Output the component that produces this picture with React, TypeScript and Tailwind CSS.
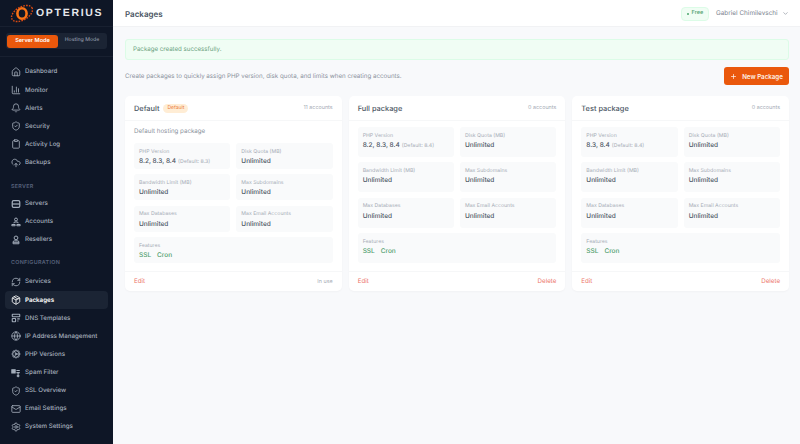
import {
  Home,
  BarChart3,
  Bell,
  ShieldCheck,
  Clipboard,
  CloudUpload,
  RefreshCw,
  Package,
  Globe,
  Cog,
  Mail,
  Settings,
  ChevronDown,
  Plus,
} from "lucide-react";
import type { ComponentType } from "react";

type IconProps = { size?: number; strokeWidth?: number; className?: string };
type NavItem = { label: string; icon: ComponentType<IconProps>; active?: boolean };

function ServersIcon({ size, className }: IconProps) {
  return (
    <svg width={size} height={size} viewBox="0 0 24 24" fill="none" stroke="currentColor" strokeWidth="3" className={className}>
      <rect x="3" y="4" width="18" height="16" rx="3" />
      <path d="M3 12h18" />
    </svg>
  );
}

function AccountsIcon({ size, className }: IconProps) {
  return (
    <svg width={size} height={size} viewBox="0 0 24 24" fill="none" stroke="currentColor" strokeWidth="2.4" className={className}>
      <circle cx="12" cy="6" r="3.5" />
      <path d="M7 15l1-3h8l1 3" />
      <path d="M2 18h8v3H2zM14 18h8v3h-8z" />
    </svg>
  );
}

function ResellersIcon({ size, className }: IconProps) {
  return (
    <svg width={size} height={size} viewBox="0 0 24 24" fill="none" stroke="currentColor" strokeWidth="2.4" className={className}>
      <circle cx="12" cy="7" r="4.5" />
      <path d="M5 21v-4a3 3 0 0 1 3-3h8a3 3 0 0 1 3 3v4z" />
      <path d="M5 17.500h14" />
    </svg>
  );
}

function DnsIcon({ size, className }: IconProps) {
  return (
    <svg width={size} height={size} viewBox="0 0 24 24" fill="none" stroke="currentColor" strokeWidth="2.6" className={className}>
      <rect x="3" y="3" width="18" height="6" rx="1" />
      <rect x="3" y="13" width="8" height="8" rx="1" />
      <path d="M15 14h6M15 19h3" />
    </svg>
  );
}

function SpamIcon({ size, className }: IconProps) {
  return (
    <svg width={size} height={size} viewBox="0 0 24 24" fill="none" stroke="currentColor" strokeWidth="2.6" className={className}>
      <path d="M2 4h8v8H2z" fill="currentColor" />
      <path d="M13 6h8M13 11h8M17 11v10M14 18l3 3 3-3" />
    </svg>
  );
}

const mainNav: NavItem[] = [
  { label: "Dashboard", icon: Home },
  { label: "Monitor", icon: BarChart3 },
  { label: "Alerts", icon: Bell },
  { label: "Security", icon: ShieldCheck },
  { label: "Activity Log", icon: Clipboard },
  { label: "Backups", icon: CloudUpload },
];

const serverNav: NavItem[] = [
  { label: "Servers", icon: ServersIcon },
  { label: "Accounts", icon: AccountsIcon },
  { label: "Resellers", icon: ResellersIcon },
];

const configNav: NavItem[] = [
  { label: "Services", icon: RefreshCw },
  { label: "Packages", icon: Package, active: true },
  { label: "DNS Templates", icon: DnsIcon },
  { label: "IP Address Management", icon: Globe },
  { label: "PHP Versions", icon: Cog },
  { label: "Spam Filter", icon: SpamIcon },
  { label: "SSL Overview", icon: ShieldCheck },
  { label: "Email Settings", icon: Mail },
  { label: "System Settings", icon: Settings },
];

function NavRow({ item }: { item: NavItem }) {
  const Icon = item.icon;
  return (
    <div
      className={
        item.active
          ? "mx-[5px] flex h-[18.12px] items-center gap-[4px] rounded-[4px] bg-[#1b2434] pl-[6px] text-[6.2px] font-semibold text-white"
          : "mx-[5px] flex h-[18.12px] items-center gap-[4px] pl-[6px] text-[6.2px] font-medium text-[#a3adbb]"
      }
    >
      <Icon size={10} strokeWidth={2} className="shrink-0" />
      <span className="whitespace-nowrap">{item.label}</span>
    </div>
  );
}

function Logo() {
  return (
    <svg width="24" height="24" viewBox="0 0 24 24" fill="none" className="shrink-0">
      <ellipse cx="12" cy="12.500" rx="4.600" ry="5.200" stroke="#f97316" strokeWidth="2.600" />
      <ellipse
        cx="12"
        cy="12.500"
        rx="11.500"
        ry="6.500"
        transform="rotate(-30 12 12.500)"
        stroke="#dc4a12"
        strokeWidth="1.400"
        strokeDasharray="1.600 1.200"
      />
    </svg>
  );
}

function Sidebar() {
  return (
    <aside className="flex h-[444px] w-[113px] shrink-0 flex-col bg-[#0e1626]">
      <div className="flex h-[27px] items-center gap-[2px] border-b border-[#182030] pl-[10px]">
        <Logo />
        <span className="pt-[2px] font-['Liberation_Sans',sans-serif] text-[10.5px] font-bold tracking-[1.7px] text-[#e5e7eb]">
          OPTERIUS
        </span>
      </div>
      <div className="border-b border-[#182030] px-[6px] pt-[6px] pb-[7px]">
        <div className="flex h-[16px] items-center rounded-[3px] bg-[#1b2434] p-px">
          <div className="flex h-[13px] w-[51px] items-center justify-center rounded-[3px] bg-[#ea580c] text-[5.6px] font-semibold text-white">
            Server Mode
          </div>
          <div className="flex-1 text-center text-[5.2px] font-medium text-[#8d97a6]">Hosting Mode</div>
        </div>
      </div>
      <nav className="pt-[6px]">
        {mainNav.map((item) => (
          <NavRow key={item.label} item={item} />
        ))}
      </nav>
      <div className="pt-[11px] pb-[3px] pl-[11px] text-[5.4px] leading-[9px] font-semibold tracking-[0.3px] text-[#56617a]">
        SERVER
      </div>
      <nav>
        {serverNav.map((item) => (
          <NavRow key={item.label} item={item} />
        ))}
      </nav>
      <div className="pt-[10px] pb-[5px] pl-[11px] text-[5.4px] leading-[9px] font-semibold tracking-[0.3px] text-[#56617a]">
        CONFIGURATION
      </div>
      <nav>
        {configNav.map((item) => (
          <NavRow key={item.label} item={item} />
        ))}
      </nav>
    </aside>
  );
}

function Stat({ label, value, note, green }: { label: string; value?: string; note?: string; green?: boolean }) {
  return (
    <div className="rounded-[3px] bg-[#f9fafb] px-[5px] pt-[4.5px]">
      <div className="text-[5.2px] leading-[8px] text-[#a5abb5]">{label}</div>
      {green ? (
        <div className="mt-[0.5px] flex gap-[6px] text-[6.5px] leading-[10px] font-medium text-[#4f9e6d]">
          <span>SSL</span>
          <span>Cron</span>
        </div>
      ) : (
        <div className="mt-[0.5px] whitespace-nowrap text-[6.5px] leading-[10px] font-medium text-[#4b5563]">
          {value}
          {note && <span className="ml-[2px] text-[5.2px] font-normal text-[#a5abb5]">{note}</span>}
        </div>
      )}
    </div>
  );
}

type Pkg = {
  name: string;
  accounts: string;
  php: string;
  phpDefault: string;
  isDefault?: boolean;
};

const packages: Pkg[] = [
  { name: "Default", accounts: "11 accounts", php: "8.2, 8.3, 8.4", phpDefault: "(Default: 8.3)", isDefault: true },
  { name: "Full package", accounts: "0 accounts", php: "8.2, 8.3, 8.4", phpDefault: "(Default: 8.4)" },
  { name: "Test package", accounts: "0 accounts", php: "8.3, 8.4", phpDefault: "(Default: 8.4)" },
];

function PackageCard({ pkg }: { pkg: Pkg }) {
  return (
    <div className="flex h-[195px] flex-col rounded-[5px] bg-white shadow-[0_1px_2px_rgba(0,0,0,0.03)]">
      <div className="flex h-[25px] shrink-0 items-center justify-between border-b border-[#f6f7f8] px-[9px] pt-px">
        <div className="flex items-center gap-[4px]">
          <span className="text-[7.4px] font-medium text-[#4b5563]">{pkg.name}</span>
          {pkg.isDefault && (
            <span className="flex h-[8.5px] items-center rounded-full bg-[#ffedd5] px-[4px] text-[5px] text-[#ea7a3c]">
              Default
            </span>
          )}
        </div>
        <span className="text-[5.4px] text-[#a5abb5]">{pkg.accounts}</span>
      </div>
      <div className="flex min-h-0 flex-1 flex-col px-[9px] pt-[6px] pb-[8px]">
        {pkg.isDefault && (
          <div className="mb-[6px] h-[10px] text-[6.2px] leading-[9px] text-[#8a919c]">Default hosting package</div>
        )}
        <div className="grid min-h-0 flex-1 auto-rows-fr grid-cols-2 gap-x-[6px] gap-y-[5.5px]">
          <Stat label="PHP Version" value={pkg.php} note={pkg.phpDefault} />
          <Stat label="Disk Quota (MB)" value="Unlimited" />
          <Stat label="Bandwidth Limit (MB)" value="Unlimited" />
          <Stat label="Max Subdomains" value="Unlimited" />
          <Stat label="Max Databases" value="Unlimited" />
          <Stat label="Max Email Accounts" value="Unlimited" />
          <div className="col-span-2 grid">
            <Stat label="Features" green />
          </div>
        </div>
      </div>
      <div className="flex h-[20px] shrink-0 items-center justify-between border-t border-[#f6f7f8] px-[9px] pt-px text-[6.2px]">
        <span className="text-[#ec7467]">Edit</span>
        {pkg.isDefault ? (
          <span className="text-[5.4px] text-[#a5abb5]">In use</span>
        ) : (
          <span className="text-[#ec7467]">Delete</span>
        )}
      </div>
    </div>
  );
}

export default function App() {
  return (
    <div className="flex h-[444px] w-[800px] overflow-hidden bg-[#f8f9fb] font-['Inter',sans-serif] antialiased opacity-[0.999] [text-rendering:geometricPrecision]">
      <Sidebar />
      <main className="min-w-0 flex-1">
        <header className="flex h-[27px] items-center justify-between border-b border-[#f1f2f4] bg-white pt-px pr-[11px] pl-[12px]">
          <h1 className="pt-px text-[8px] font-semibold text-[#4b5563]">Packages</h1>
          <div className="flex items-center gap-[5px]">
            <span className="mr-[2px] flex h-[14px] w-[28px] items-center justify-center gap-[3px] rounded-[4px] border border-[#dcfce7] bg-[#f0fdf4] text-[5.6px] font-medium text-[#4f9e6d]">
              <span className="h-[2px] w-[2px] rounded-full bg-[#4ca66e]" />
              Free
            </span>
            <span className="w-[61px] text-right text-[6.4px] whitespace-nowrap text-[#7c8490]">Gabriel Chimilevschi</span>
            <ChevronDown size={7} className="text-[#7c8490]" />
          </div>
        </header>
        <div className="pt-[11.5px] pr-[11px] pl-[12px]">
          <div className="flex h-[21px] items-center rounded-[3px] border border-[#dcfce7] bg-[#f0fdf4] pt-px pl-[7px] text-[6.15px] text-[#6b9f80]">
            Package created successfully.
          </div>
          <div className="mt-[7.5px] flex h-[18px] items-center justify-between">
            <p className="pt-px text-[6.2px] text-[#8a919c]">
              Create packages to quickly assign PHP version, disk quota, and limits when creating accounts.
            </p>
            <button className="flex h-[18px] w-[65px] items-center justify-center gap-[5px] rounded-[3px] bg-[#ea580c] pt-px text-[6.2px] font-semibold text-[#fff3ea]">
              <Plus size={7} strokeWidth={2.5} />
              New Package
            </button>
          </div>
          <div className="mt-[11px] grid grid-cols-3 gap-[7px]">
            {packages.map((pkg) => (
              <PackageCard key={pkg.name} pkg={pkg} />
            ))}
          </div>
        </div>
      </main>
    </div>
  );
}
